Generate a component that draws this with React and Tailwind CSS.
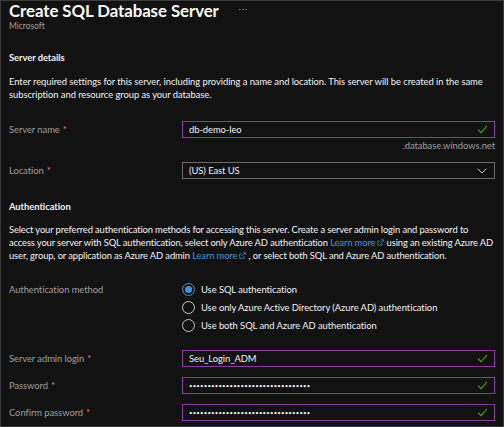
import React from 'react';

const Req = () => <span className="text-[#f1707b] ml-[3px]">*</span>;

const Check = () => (
    <svg width="11" height="9" viewBox="0 0 11 9" className="shrink-0">
        <path d="M1 4.6 L4 7.6 L10 1" fill="none" stroke="#57a300" strokeWidth="1.1" />
    </svg>
);

const ExtLink = () => (
    <svg width="7" height="7" viewBox="0 0 8 8" className="inline-block ml-[2px] align-baseline">
        <path d="M4.5 0.8 H7.2 V3.5 M7.2 0.8 L3.6 4.4 M5.8 4.8 V7.2 H0.8 V2.2 H3.2" fill="none" stroke="#3a96dd" strokeWidth="0.8" />
    </svg>
);

const FieldRow = ({ label, value, dots, top }) => (
    <div className={`flex items-center ${top}`}>
        <div className="w-[173px] text-[#a19f9d]">{label}<Req /></div>
        <div className="flex-1 h-[17px] border border-[#8a3aa0] flex items-center pl-[6px] pr-[6px]">
            <span className={`flex-1 text-[#f3f2f1] ${dots ? 'text-[6px] tracking-[0.2px]' : ''}`}>{value}</span>
            <Check />
        </div>
    </div>
);

const Radio = ({ checked, label }) => (
    <div className="flex items-center h-[18px]">
        <span className={`w-[13px] h-[13px] rounded-full border ${checked ? 'border-[#3a96dd]' : 'border-[#c8c6c4]'} flex items-center justify-center`}>
            {checked && <span className="w-[7px] h-[7px] rounded-full bg-[#3a96dd]" />}
        </span>
        <span className="ml-[6px] text-[#f3f2f1]">{label}</span>
    </div>
);

export default function App() {
    const dots = '•'.repeat(33);
    return (
        <div className="w-[504px] h-[427px] bg-[#121212] border border-[#3b3b3b] pl-2 pr-2 text-[9.4px] tracking-[-0.05px] leading-[13px] text-[#f3f2f1] overflow-hidden" style={{ fontFamily: 'Lato, "Noto Sans", sans-serif' }}>
            <div className="flex items-center">
                <h1 className="text-[16.8px] leading-[19px] font-bold text-white">Create SQL Database Server</h1>
                <span className="ml-[20px] text-[#a19f9d] text-[8px] -mt-[2px] tracking-[1px]">···</span>
            </div>
            <div className="text-[8.5px] leading-[10px] text-[#a19f9d] mt-[1px]">Microsoft</div>

            <div className="font-bold mt-[20px]">Server details</div>
            <p className="mt-[11px]">
                Enter required settings for this server, including providing a name and location. This server will be created in the same subscription and resource group as your database.
            </p>

            <FieldRow label="Server name" value="db-demo-leo" top="mt-[20px]" />
            <div className="text-right text-[#a19f9d] mt-[1px]">.database.windows.net</div>

            <div className="flex items-center mt-[10px]">
                <div className="w-[173px] text-[#a19f9d]">Location<Req /></div>
                <div className="flex-1 h-[17px] border border-[#6b6b6b] flex items-center pl-[6px] pr-[7px]">
                    <span className="flex-1">(US) East US</span>
                    <svg width="10" height="6" viewBox="0 0 10 6">
                        <path d="M0.8 0.8 L5 5 L9.2 0.8" fill="none" stroke="#c8c6c4" strokeWidth="1" />
                    </svg>
                </div>
            </div>

            <div className="font-bold mt-[21px]">Authentication</div>
            <p className="mt-[10px] tracking-[-0.12px]">
                Select your preferred authentication methods for accessing this server. Create a server admin login and password to access your server with SQL authentication, select only Azure AD authentication{' '}
                <span className="text-[#3a96dd]">Learn more<ExtLink /></span> using an existing Azure AD user, group, or application as Azure AD admin{' '}
                <span className="text-[#3a96dd]">Learn more<ExtLink /></span> , or select both SQL and Azure AD authentication.
            </p>

            <div className="flex mt-[18px]">
                <div className="w-[173px] text-[#a19f9d] pt-[3px]">Authentication method</div>
                <div className="flex flex-col">
                    <Radio checked label="Use SQL authentication" />
                    <Radio label="Use only Azure Active Directory (Azure AD) authentication" />
                    <Radio label="Use both SQL and Azure AD authentication" />
                </div>
            </div>

            <FieldRow label="Server admin login" value="Seu_Login_ADM" top="mt-[16px]" />
            <FieldRow label="Password" value={dots} dots top="mt-[10px]" />
            <FieldRow label="Confirm password" value={dots} dots top="mt-[10px]" />
        </div>
    );
}
